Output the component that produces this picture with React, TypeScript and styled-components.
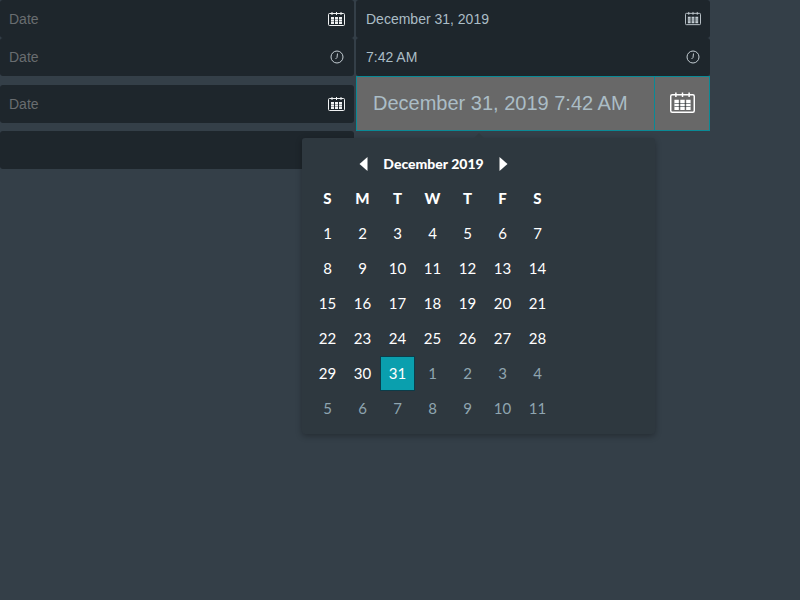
import React from 'react'
import styled, { createGlobalStyle } from 'styled-components'

const GlobalStyle = createGlobalStyle`
  html, body {
    margin: 0;
    height: 100%;
    background: #343f48;
    font-family: "Liberation Sans", Arial, sans-serif;
    overflow: hidden;
  }
`

const Page = styled.div`
  position: relative;
  width: 710px;
  display: grid;
  grid-template-columns: 354px 354px;
  grid-template-rows: 38px 38px 55px 38px;
  column-gap: 2px;
`

const Field = styled.div`
  display: flex;
  align-items: center;
  justify-content: space-between;
  height: 38px;
  padding: 0 9px;
  box-sizing: border-box;
  background: #1e262c;
  border-radius: 3px;
  color: #abbdc6;
  font-size: 14px;
`

const ValueField = styled(Field)`
  padding: 0 9px 0 10px;
`

const CenteredField = styled(Field)`
  align-self: center;
  margin-top: 1px;
`

const Placeholder = styled.span`
  color: #696d70;
`

const FieldIcon = styled.span`
  display: flex;
  color: #f0f2f3;
`

const DimIcon = styled(FieldIcon)`
  color: #c3ccd2;
`

const OpenField = styled.div`
  display: flex;
  height: 55px;
  box-sizing: border-box;
  background: #686868;
  border: 1px solid #0a8a96;
  color: #abbdc6;
  font-size: 20px;
`

const OpenValue = styled.div`
  flex: 1;
  display: flex;
  align-items: center;
  padding-left: 16px;
`

const OpenButton = styled.div`
  width: 54px;
  display: flex;
  align-items: center;
  justify-content: center;
  border-left: 1px solid #0a8a96;
  color: #fff;
`

const Popup = styled.div`
  position: absolute;
  left: 302px;
  top: 138px;
  width: 353px;
  height: 296px;
  box-sizing: border-box;
  padding: 8px 8px 0 8px;
  background: #2e383f;
  border-radius: 3px;
  box-shadow: 0 2px 6px rgba(0, 0, 0, 0.3);
  font-family: Lato, "Noto Sans", sans-serif;
  color: #fff;
  &::before {
    content: '';
    position: absolute;
    top: -5px;
    left: 171px;
    border-left: 6px solid transparent;
    border-right: 6px solid transparent;
    border-bottom: 6px solid #2e383f;
  }
`

const Header = styled.div`
  display: flex;
  align-items: center;
  width: 245px;
  height: 35px;
  padding-left: 49px;
  box-sizing: border-box;
  font-weight: 900;
  font-size: 14px;
`

const MonthLabel = styled.span`
  width: 131px;
  text-align: center;
`

const Arrow = styled.span`
  display: flex;
`

const CalendarGrid = styled.div`
  display: grid;
  grid-template-columns: repeat(7, 35px);
  grid-auto-rows: 35px;
`

const Cell = styled.div<{ $muted?: boolean; $selected?: boolean; $head?: boolean }>`
  display: flex;
  align-items: center;
  justify-content: center;
  padding-bottom: 1px;
  font-size: 15px;
  font-weight: ${(p) => (p.$head ? 900 : 400)};
  color: ${(p) => (p.$muted ? '#8fa5b0' : '#fff')};
  background: ${(p) => (p.$selected ? '#0a9fae' : 'transparent')};
  box-sizing: border-box;
  border: ${(p) => (p.$selected ? '1px solid #0b3d4a' : 'none')};
`

const CalendarIcon = ({ size = 17 }: { size?: number }) => (
  <svg width={size} height={size} viewBox="0 0 17 17" fill="none" stroke="currentColor">
    <rect x="0.5" y="2.5" width="16" height="12" rx="1" />
    <path d="M4 1v3M8.5 1v3M13 1v3" />
    <path d="M3 6h3v7H3zM7 6h3v7H7zM11 6h3v7h-3z" fill="currentColor" stroke="none" />
    <path d="M3 8.5h11M3 10.5h11" stroke="#1e262c" strokeOpacity="0.55" strokeWidth="0.7" />
  </svg>
)

const ClockIcon = () => (
  <svg width="16" height="16" viewBox="0 0 16 16" fill="none" stroke="currentColor">
    <circle cx="8" cy="8" r="6" />
    <path d="M8.5 4.5 8 8.5 6.5 10" />
  </svg>
)

const ArrowLeft = () => (
  <svg width="9" height="14" viewBox="0 0 9 14">
    <path d="M8.5 0v14L0.5 7z" fill="#fff" />
  </svg>
)

const ArrowRight = () => (
  <svg width="9" height="14" viewBox="0 0 9 14">
    <path d="M0.5 0v14l8-7z" fill="#fff" />
  </svg>
)

const HEAD = ['S', 'M', 'T', 'W', 'T', 'F', 'S']
const DAYS = [
  ...Array.from({ length: 31 }, (_, i) => ({ n: i + 1, muted: false })),
  ...Array.from({ length: 11 }, (_, i) => ({ n: i + 1, muted: true })),
]

export default function App() {
  return (
    <>
      <GlobalStyle />
      <Page>
        <Field>
          <Placeholder>Date</Placeholder>
          <FieldIcon>
            <CalendarIcon />
          </FieldIcon>
        </Field>
        <ValueField>
          December 31, 2019
          <DimIcon>
            <CalendarIcon size={16} />
          </DimIcon>
        </ValueField>
        <Field>
          <Placeholder>Date</Placeholder>
          <DimIcon>
            <ClockIcon />
          </DimIcon>
        </Field>
        <ValueField>
          7:42 AM
          <DimIcon>
            <ClockIcon />
          </DimIcon>
        </ValueField>
        <CenteredField>
          <Placeholder>Date</Placeholder>
          <FieldIcon>
            <CalendarIcon />
          </FieldIcon>
        </CenteredField>
        <OpenField>
          <OpenValue>December 31, 2019 7:42 AM</OpenValue>
          <OpenButton>
            <CalendarIcon size={25} />
          </OpenButton>
        </OpenField>
        <Field />
        <Popup>
          <Header>
            <Arrow>
              <ArrowLeft />
            </Arrow>
            <MonthLabel>December 2019</MonthLabel>
            <Arrow>
              <ArrowRight />
            </Arrow>
          </Header>
          <CalendarGrid>
            {HEAD.map((d, i) => (
              <Cell key={i} $head>
                {d}
              </Cell>
            ))}
            {DAYS.map((d, i) => (
              <Cell key={i} $muted={d.muted} $selected={!d.muted && d.n === 31}>
                {d.n}
              </Cell>
            ))}
          </CalendarGrid>
        </Popup>
      </Page>
    </>
  )
}
